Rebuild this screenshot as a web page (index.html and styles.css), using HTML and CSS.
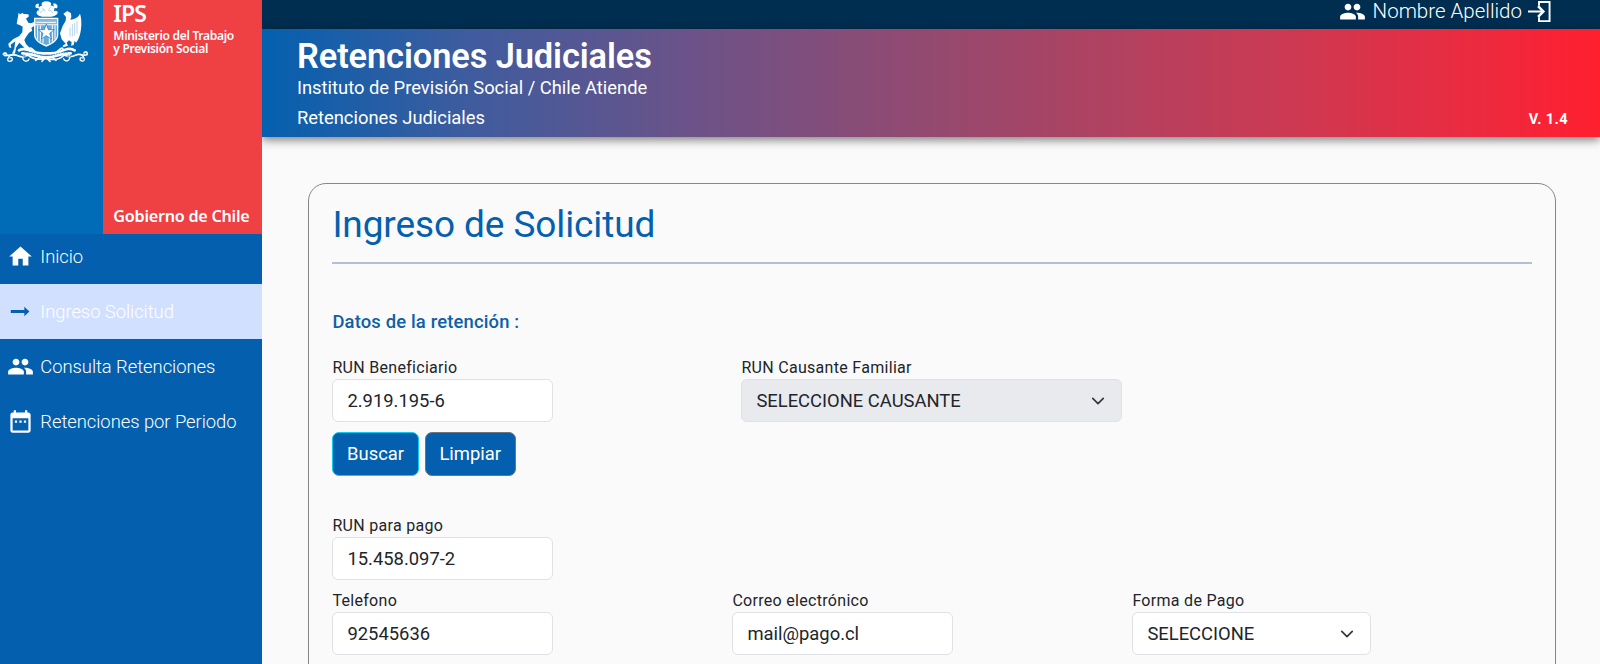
FILE: index.html
```html
<!DOCTYPE html>
<html lang="es">
<head>
<meta charset="utf-8">
<title>Retenciones Judiciales</title>
<link rel="stylesheet" href="styles.css">
</head>
<body>
<svg class="defs" width="0" height="0">
  <symbol id="people" viewBox="0 0 24 24"><path d="M16 11c1.660 0 2.990-1.340 2.990-3S17.660 5 16 5s-3 1.340-3 3 1.340 3 3 3zm-8 0c1.660 0 2.990-1.340 2.990-3S9.660 5 8 5 5 6.340 5 8s1.340 3 3 3zm0 2c-2.330 0-7 1.170-7 3.500V19h14v-2.500C15 14.170 10.330 13 8 13zm8 0c-.290 0-.620.020-.970.050C16.190 13.890 17 15.020 17 16.500V19h6v-2.500c0-2.330-4.670-3.500-7-3.500z"/></symbol>
  <symbol id="chevron" viewBox="0 0 16 16"><path d="M2 5l6 6 6-6" fill="none" stroke="#343a40" stroke-width="2" stroke-linecap="round" stroke-linejoin="round"/></symbol>
</svg>
<div class="app">
  <aside class="sidebar">
    <div class="brand">
      <div class="brand-blue">
        <svg class="crest" viewBox="0 0 300 210">
          <g fill="#fff">
            <path d="M126 50c-10-2-18-7-16-14 2-5 7-5 8-3-5-8 1-17 9-16-5-4-2-13 12-13s18 9 12 13c10-2 16 8 10 17 6-4 13-1 12 4-2 8-12 10-19 12z"/>
            <path d="M108 24c-5-8 2-15 9-12-2 5-1 9 2 13zM160 24c2-5 1-9-1-13 10-3 17 6 12 14z"/>
            <path d="M56 38l4 5 7-4 5 3 13 1 2 6-9 7 7 12 8 2 9-4 4 9-12 9 3 8-10 6-9 13-5 9 5 12 11 11-8 10-12-14-11-11-10 15-3 18H36l7-15 2-17 1-5-14 10 2 10-7-2-2-11 15-14 17-8 10-12 1-17-9-5-9-3z"/>
            <path d="M190 41l12-8 11 7 1 11-3 8c14-1 25-9 29-18 5 14 5 37 2 53-2 15-8 28-14 34l-4-6-3 13-8 2 2-10-8-6-7 7 4 9-14 5-2-5 9-6-12-13-5-18 8-22 9-16 1-11z"/>
            <path d="M102 53h73v50c0 18-14 28-36 37-23-9-37-19-37-37z"/>
          </g>
          <path d="M106 57h65v16h-65z" fill="#83b9e0"/>
          <path d="M106 76h65v28c0 15-13 23-32 31-20-8-33-16-33-31z" fill="#69aadb"/>
          <path d="M113 76v43M121 76v49M129 109v20M148 109v20M157 76v49M165 76v43M109 67h59" stroke="#fff" stroke-width="3"/>
          <path d="M139 72l6 17h18l-14 11 5 17-15-10-15 10 5-17-14-11h18z" fill="#fff" stroke="#1672b8" stroke-width="2"/>
          <path d="M121 39c4-8 10-10 15-7M144 30c8 0 11 3 14 10M127 23l5 7M153 20l-6 7M217 72v38M224 69v38M231 63v38M210 83v26" fill="none" stroke="#8abfe2" stroke-width="2"/>
          <g fill="none" stroke="#fff" stroke-linecap="round">
            <path d="M10 162c5-7 13-1 8 5M13 166c16 3 26-6 41 1 8 4 20 5 30-2 16 14 34 15 54 10 23 7 43 2 55-10 11 7 23 6 35 0 12-6 20 4 33-1M260 164c5-7-4-12-8-5" stroke-width="5"/>
            <path d="M35 164c-14 7-16 21-5 20 10-1 9-14 0-10M70 168c-6 15 13 21 17 9M242 163c14 8 14 22 4 20-9-2-7-13 1-9M208 167c5 15-13 21-17 9" stroke-width="4"/>
            <path d="M57 151c15-9 30-1 42 4 20 7 62 7 82 0 15-7 28-13 43-4M67 160c35-1 41 12 72 12s37-13 73-12" stroke-width="8"/>
            <path d="M92 154c-8-8-2-12 4-7l14 12M185 154c8-8 2-12-4-7l-14 12M126 184l11-13 13 13M107 181l10-8M168 181l-10-8" stroke-width="5"/>
          </g>
          <path d="M74 156c27 0 40 11 65 11s39-11 65-11" fill="none" stroke="#3c8dcb" stroke-width="3" stroke-dasharray="5 3"/>
          <path d="M67 168l15 4M197 172l16-4" stroke="#0071bb" stroke-width="2"/>
        </svg>
      </div>
      <div class="brand-red">
        <div class="ips">IPS</div>
        <div class="ministry">Ministerio del Trabajo<br>y Previsión Social</div>
        <div class="gob">Gobierno de Chile</div>
      </div>
    </div>
    <nav class="nav">
      <a class="nav-item first"><svg class="ico" viewBox="0 0 24 24"><path d="M10 20v-6h4v6h5v-8h3L12 3 2 12h3v8z"/></svg><span>Inicio</span></a>
      <a class="nav-item active"><svg class="ico" viewBox="0 0 24 24"><path d="M3.500 10.700h12.500V7.600L20.700 12 16 16.400v-3.100H3.500z"/></svg><span>Ingreso Solicitud</span></a>
      <a class="nav-item"><svg class="ico"><use href="#people"/></svg><span>Consulta Retenciones</span></a>
      <a class="nav-item"><svg class="ico" viewBox="0 0 24 24"><path d="M9 11H7v2h2zm4 0h-2v2h2zm4 0h-2v2h2zm2-7h-1V2h-2v2H8V2H6v2H5c-1.110 0-1.990.9-1.990 2L3 20c0 1.100.89 2 2 2h14c1.100 0 2-.9 2-2V6c0-1.100-.9-2-2-2zm0 16H5V9h14z"/></svg><span>Retenciones por Periodo</span></a>
    </nav>
  </aside>
  <div class="main">
    <div class="topbar">
      <svg class="ico"><use href="#people"/></svg>
      <span class="user">Nombre Apellido</span>
      <svg class="exit" viewBox="0 0 24 24" fill="none" stroke="#fff" stroke-width="2"><path d="M11.500 6V2H22.500v20H11.500v-4M0 12h15"/><path d="M10.500 6.500l5.500 5.500-5.500 5.500" stroke-width="2.600"/></svg>
    </div>
    <header class="header">
      <div>
        <h1>Retenciones Judiciales</h1>
        <p class="sub">Instituto de Previsión Social / Chile Atiende</p>
        <p class="crumb">Retenciones Judiciales</p>
      </div>
      <div class="version">V. 1.4</div>
    </header>
    <section class="card">
      <h2>Ingreso de Solicitud</h2>
      <h3>Datos de la retención :</h3>
      <div class="row wide">
        <div class="field">
          <label>RUN Beneficiario</label>
          <div class="control">2.919.195-6</div>
          <div class="buttons"><button class="btn primary">Buscar</button><button class="btn">Limpiar</button></div>
        </div>
        <div class="field">
          <label>RUN Causante Familiar</label>
          <div class="control select disabled"><span>SELECCIONE CAUSANTE</span><svg class="chev"><use href="#chevron"/></svg></div>
        </div>
      </div>
      <div class="row pay">
        <div class="field"><label>RUN para pago</label><div class="control">15.458.097-2</div></div>
      </div>
      <div class="row">
        <div class="field"><label>Telefono</label><div class="control">92545636</div></div>
        <div class="field"><label>Correo electrónico</label><div class="control">mail@pago.cl</div></div>
        <div class="field"><label>Forma de Pago</label><div class="control select short"><span>SELECCIONE</span><svg class="chev"><use href="#chevron"/></svg></div></div>
      </div>
    </section>
  </div>
</div>
</body>
</html>
```

FILE: styles.css
```css
* { box-sizing: border-box; margin: 0; }
body { background: #fafafa; color: #212529; font-family: Roboto, sans-serif; height: 664px; overflow: hidden; }
.defs { display: block; }
.app { display: flex; height: 664px; overflow: hidden; }

.sidebar { width: 262.4px; flex: none; background: #0460ae; position: relative; z-index: 1; }
.brand { display: flex; height: 233.5px; }
.brand-blue { width: 103.3px; background: #006cb7; }
.crest { display: block; width: 100px; height: 70px; }
.brand-red { flex: 1; display: flex; flex-direction: column; background: #ef4044; color: #fff; font-family: "Noto Sans", sans-serif; font-weight: 600; padding-left: 10px; white-space: nowrap; }
.ips { font-size: 23px; line-height: 26px; letter-spacing: -0.8px; }
.ministry { font-size: 12px; line-height: 13px; padding-top: 3px; letter-spacing: -0.3px; }
.gob { font-size: 16.2px; line-height: 22px; margin-top: auto; padding-bottom: 7px; letter-spacing: -0.26px; }

.nav-item { display: flex; align-items: center; height: 55px; padding-left: 6.8px; gap: 6.5px; color: #fff; font-weight: 300; font-size: 18.4px; letter-spacing: -0.04px; white-space: nowrap; }
.nav-item.first { height: 50.5px; padding-bottom: 4px; }
.nav-item.active { background: #d2e0ff; }
.nav-item.active .ico { fill: #0460ae; width: 26px; margin-right: 1px; }
.ico { width: 27px; height: 27px; fill: #fff; flex: none; }

.main { flex: 1; min-width: 0; }
.topbar { height: 28.6px; background: #002e50; display: flex; align-items: center; justify-content: flex-end; padding: 0 49px 6px 0; color: #fff; }
.user { font-size: 20.5px; font-weight: 300; margin: 0 6px 0 7px; }
.exit { width: 23px; height: 23px; }
.header { position: relative; height: 108.5px; display: flex; justify-content: space-between; align-items: flex-end; padding: 0 32px 8px 34.6px; color: #fff; background: linear-gradient(90deg, #0460ae, #3d5c9f 15%, #6e5287 33%, #96496e 51%, #cb3a53 76%, #ec2a3f 91%, #ff1f2f); box-shadow: 0 3px 9px rgba(0, 0, 0, .5); }
h1 { font-size: 34.4px; line-height: 40px; font-weight: 600; letter-spacing: -0.1px; }
.sub { font-size: 18.35px; line-height: 22px; margin-top: 1px; }
.crumb { font-size: 18.35px; line-height: 22px; margin-top: 8px; }
.version { font-size: 14.6px; line-height: 20px; font-weight: 700; letter-spacing: .4px; padding-bottom: 0; }

.card { margin: 46px 44px 0 46px; height: 560px; padding: 0 23px; border: 1px solid #868686; border-radius: 18px; }
h2 { color: #0460ae; font-size: 37px; font-weight: 400; line-height: 46px; padding: 18px 0 14px; border-bottom: 2px solid #b4bfd5; letter-spacing: -0.1px; }
h3 { color: #0e60a8; font-size: 18.4px; font-weight: 500; line-height: 24px; margin: 46px 0 22px; letter-spacing: .17px; }
.row { display: grid; grid-template-columns: 400px 400px 1fr; }
.row.wide { grid-template-columns: 409px 1fr; }
.row.pay { margin: 38.5px 0 9px; }
label { display: block; font-size: 16px; line-height: 23px; letter-spacing: .3px; height: 23px; }
.control { display: flex; align-items: center; width: 221px; height: 43px; padding: 0 14px; background: #fff; border: 1px solid #dee2e6; border-radius: 6px; font-size: 18.4px; white-space: nowrap; }
.select { width: 381px; justify-content: space-between; }
.select.short { width: 238.5px; }
.select.disabled { background: #e9eaee; }
.chev { width: 14px; height: 14px; margin-right: 2px; }
.buttons { display: flex; gap: 6px; margin-top: 10px; }
.btn { height: 43.5px; padding: 0 13.7px; background: #0460ae; color: #fff; border: 1px solid #6c757d; border-radius: 7px; font: 400 18.4px Roboto, sans-serif; }
.btn.primary { border-color: #0dcaf0; }
```
